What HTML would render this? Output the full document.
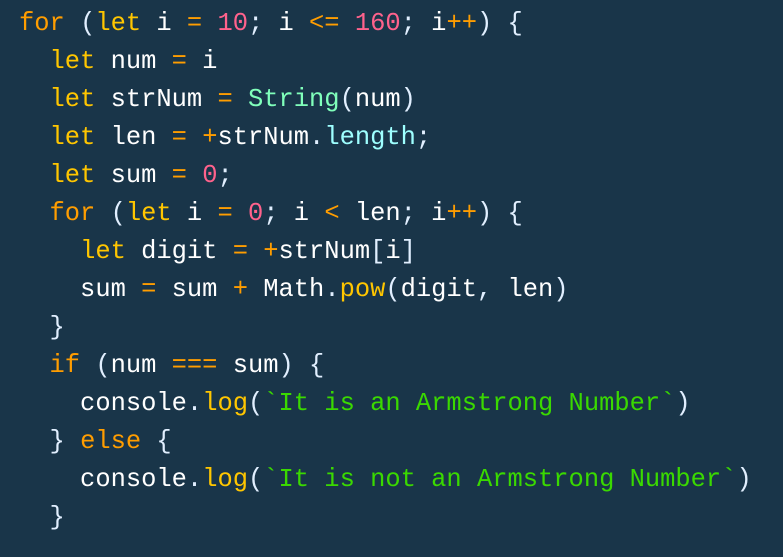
<!DOCTYPE html><html><head><style>
html,body{margin:0;padding:0;background:#193549;width:783px;height:557px;overflow:hidden}
pre{margin:0;position:absolute;left:19px;top:5px;font-family:"Liberation Mono","DejaVu Sans Mono",monospace;font-size:25.45px;line-height:38px;color:#fff}
.k{color:#ff9d00}.s{color:#ffc600}.n{color:#ff628c}.p{color:#e1efff}.c{color:#80ffbb}.l{color:#9effff}.f{color:#ffc600}.g{color:#3ad900}
</style></head><body><pre><span class="k">for</span> <span class="p">(</span><span class="s">let</span> i <span class="k">=</span> <span class="n">10</span><span class="p">;</span> i <span class="k">&lt;=</span> <span class="n">160</span><span class="p">;</span> i<span class="k">++</span><span class="p">)</span> <span class="p">{</span>
  <span class="s">let</span> num <span class="k">=</span> i
  <span class="s">let</span> strNum <span class="k">=</span> <span class="c">String</span><span class="p">(</span>num<span class="p">)</span>
  <span class="s">let</span> len <span class="k">=</span> <span class="k">+</span>strNum<span class="p">.</span><span class="l">length</span><span class="p">;</span>
  <span class="s">let</span> sum <span class="k">=</span> <span class="n">0</span><span class="p">;</span>
  <span class="k">for</span> <span class="p">(</span><span class="s">let</span> i <span class="k">=</span> <span class="n">0</span><span class="p">;</span> i <span class="k">&lt;</span> len<span class="p">;</span> i<span class="k">++</span><span class="p">)</span> <span class="p">{</span>
    <span class="s">let</span> digit <span class="k">=</span> <span class="k">+</span>strNum<span class="p">[</span>i<span class="p">]</span>
    sum <span class="k">=</span> sum <span class="k">+</span> Math<span class="p">.</span><span class="f">pow</span><span class="p">(</span>digit<span class="p">,</span> len<span class="p">)</span>
  <span class="p">}</span>
  <span class="k">if</span> <span class="p">(</span>num <span class="k">===</span> sum<span class="p">)</span> <span class="p">{</span>
    console<span class="p">.</span><span class="f">log</span><span class="p">(</span><span class="g">`It is an Armstrong Number`</span><span class="p">)</span>
  <span class="p">}</span> <span class="k">else</span> <span class="p">{</span>
    console<span class="p">.</span><span class="f">log</span><span class="p">(</span><span class="g">`It is not an Armstrong Number`</span><span class="p">)</span>
  <span class="p">}</span></pre></body></html>
